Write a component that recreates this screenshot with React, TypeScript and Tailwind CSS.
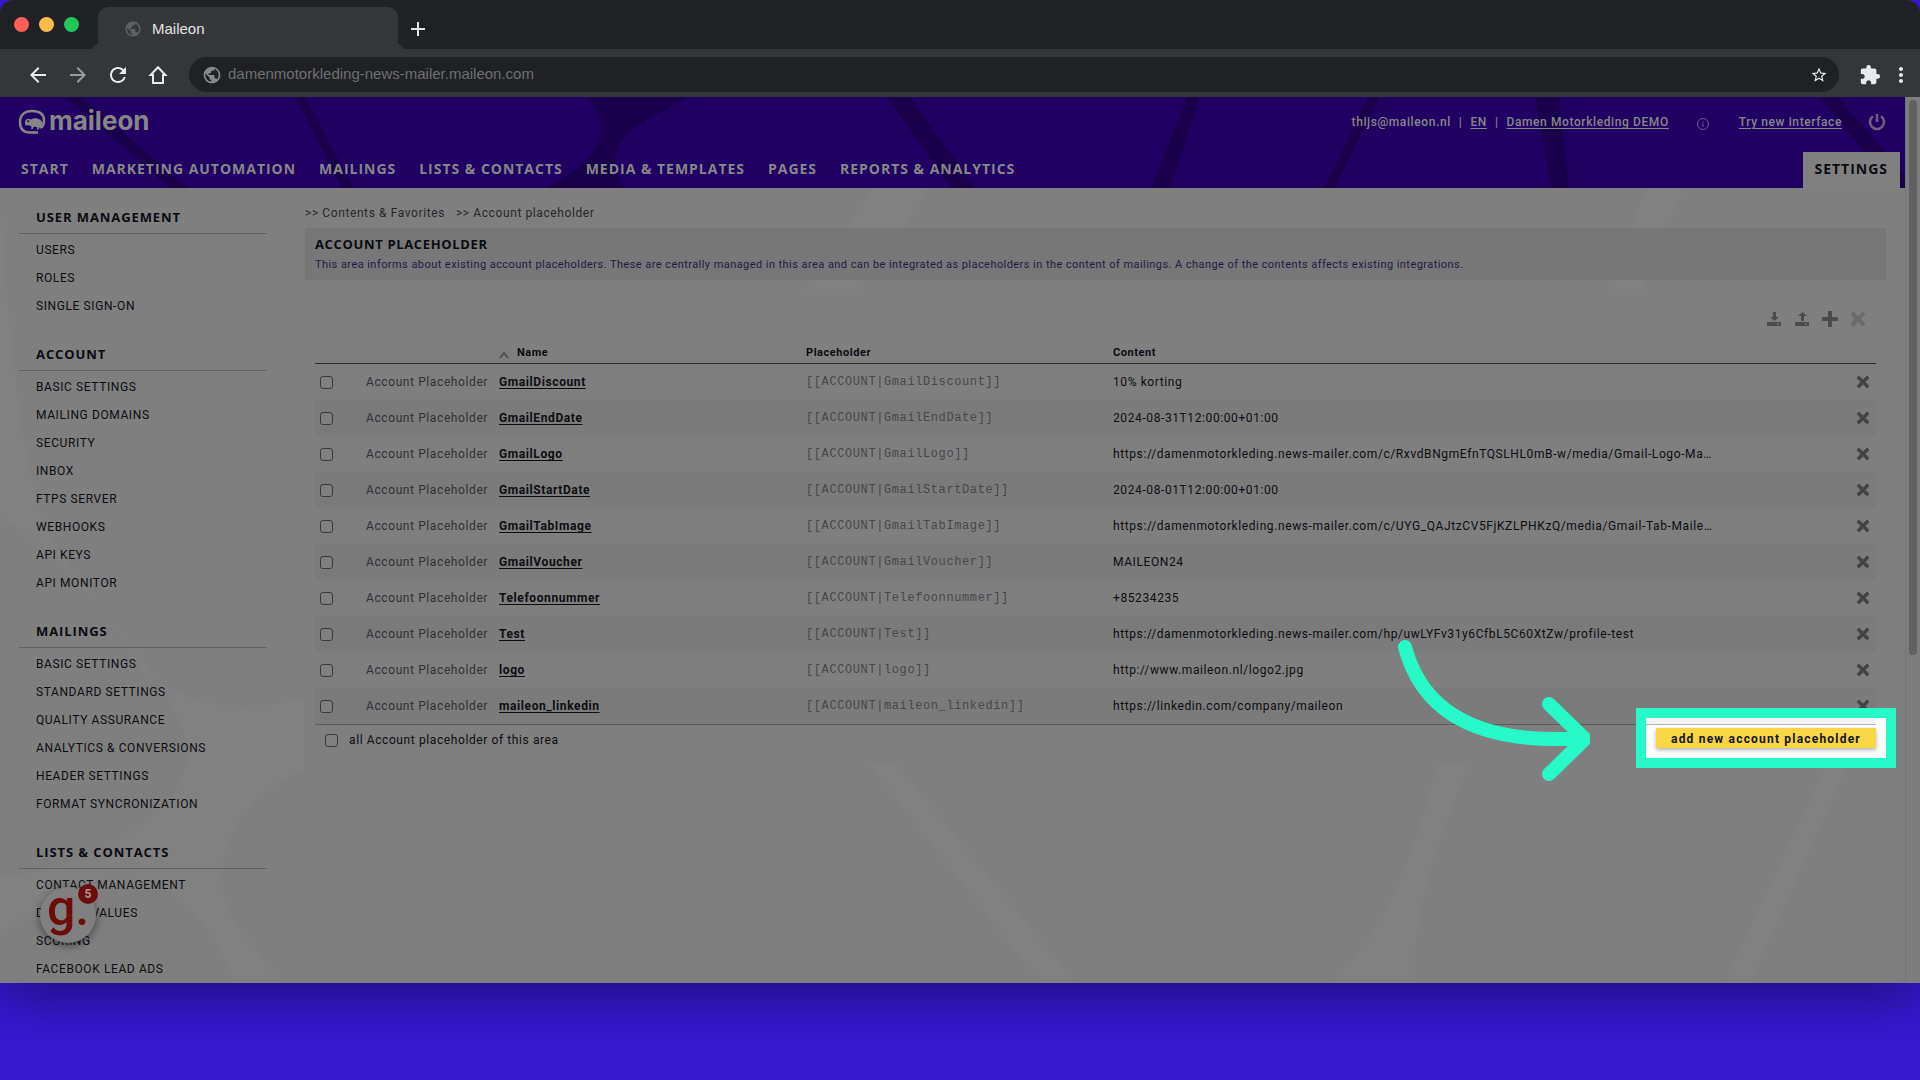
import { useState } from "react";
import { MdArrowBack, MdArrowForward, MdExtension, MdMoreVert, MdPublic, MdRefresh, MdStarBorder } from "react-icons/md";

interface MenuSection {
    title: string;
    items: string[];
}

interface PlaceholderRow {
    name: string;
    content: string;
}

const NAV = [
    "START",
    "MARKETING AUTOMATION",
    "MAILINGS",
    "LISTS & CONTACTS",
    "MEDIA & TEMPLATES",
    "PAGES",
    "REPORTS & ANALYTICS",
];

const MENU: MenuSection[] = [
    { title: "USER MANAGEMENT", items: ["USERS", "ROLES", "SINGLE SIGN-ON"] },
    {
        title: "ACCOUNT",
        items: [
            "BASIC SETTINGS",
            "MAILING DOMAINS",
            "SECURITY",
            "INBOX",
            "FTPS SERVER",
            "WEBHOOKS",
            "API KEYS",
            "API MONITOR",
        ],
    },
    {
        title: "MAILINGS",
        items: [
            "BASIC SETTINGS",
            "STANDARD SETTINGS",
            "QUALITY ASSURANCE",
            "ANALYTICS & CONVERSIONS",
            "HEADER SETTINGS",
            "FORMAT SYNCRONIZATION",
        ],
    },
    {
        title: "LISTS & CONTACTS",
        items: ["CONTACT MANAGEMENT", "DEFAULT VALUES", "SCORING", "FACEBOOK LEAD ADS"],
    },
];

const ROWS: PlaceholderRow[] = [
    { name: "GmailDiscount", content: "10% korting" },
    { name: "GmailEndDate", content: "2024-08-31T12:00:00+01:00" },
    {
        name: "GmailLogo",
        content: "https://damenmotorkleding.news-mailer.com/c/RxvdBNgmEfnTQSLHL0mB-w/media/Gmail-Logo-Ma…",
    },
    { name: "GmailStartDate", content: "2024-08-01T12:00:00+01:00" },
    {
        name: "GmailTabImage",
        content: "https://damenmotorkleding.news-mailer.com/c/UYG_QAJtzCV5FjKZLPHKzQ/media/Gmail-Tab-Maile…",
    },
    { name: "GmailVoucher", content: "MAILEON24" },
    { name: "Telefoonnummer", content: "+85234235" },
    { name: "Test", content: "https://damenmotorkleding.news-mailer.com/hp/uwLYFv31y6CfbL5C60XtZw/profile-test" },
    { name: "logo", content: "http://www.maileon.nl/logo2.jpg" },
    { name: "maileon_linkedin", content: "https://linkedin.com/company/maileon" },
];

const CHECKBOX =
    "block size-[13px] shrink-0 appearance-none rounded-[3px] border border-[#3a3a3a] bg-[#808080] checked:bg-[#1a1a1a]";

function CrossIcon({ className }: { className: string }) {
    return (
        <svg viewBox="0 0 16 16" className={className} fill="none" stroke="currentColor" strokeWidth="4" aria-hidden="true">
            <path d="M2 2l12 12M14 2L2 14" />
        </svg>
    );
}

function TabStrip() {
    return (
        <div className="flex h-[49px] items-center overflow-hidden bg-[#202124] pl-[14px]">
            <div className="flex gap-[10px]">
                <span className="size-[15px] rounded-full bg-[#ff5f57]" />
                <span className="size-[15px] rounded-full bg-[#febb4b]" />
                <span className="size-[15px] rounded-full bg-[#22c759]" />
            </div>
            <div className="relative ml-[19px] flex h-[42px] w-[300px] items-center gap-[10px] self-end rounded-t-[10px] bg-[#35363a] pt-[2px] pl-[26px] font-['Liberation_Sans',sans-serif] text-[15px] text-[#e3e4e6] before:absolute before:bottom-0 before:-left-[10px] before:size-[10px] before:rounded-br-[10px] before:shadow-[5px_5px_0_0_#35363a] after:absolute after:-right-[10px] after:bottom-0 after:size-[10px] after:rounded-bl-[10px] after:shadow-[-5px_5px_0_0_#35363a]">
                <MdPublic className="size-[18px] text-[#5f6165]" aria-hidden="true" />
                <span className="leading-5">Maileon</span>
            </div>
            <button type="button" aria-label="New tab" className="mt-2 ml-3 text-[#e3e4e6]">
                <svg viewBox="0 0 16 16" className="size-4" stroke="currentColor" strokeWidth="2" aria-hidden="true">
                    <path d="M8 1v14M1 8h14" />
                </svg>
            </button>
        </div>
    );
}

function AddressBar() {
    return (
        <div className="flex h-12 items-center bg-[#35363a] pt-[3px] pr-[7px] pl-[26px] text-[#e8eaed]">
            <div className="flex gap-4">
                <button type="button" aria-label="Back">
                    <MdArrowBack className="size-6" />
                </button>
                <button type="button" aria-label="Forward" className="text-[#9a9b9e]">
                    <MdArrowForward className="size-6" />
                </button>
                <button type="button" aria-label="Reload">
                    <MdRefresh className="size-6" />
                </button>
                <button type="button" aria-label="Home">
                    <svg viewBox="0 0 24 24" className="size-6" fill="none" stroke="currentColor" strokeWidth="2" aria-hidden="true">
                        <path d="M12 4.2L4.6 12H7v8h10v-8h2.4z" />
                    </svg>
                </button>
            </div>
            <div className="ml-[19px] flex h-[35px] flex-1 items-center rounded-full bg-[#202124] pr-[11px] pl-[13px]">
                <MdPublic className="size-5 text-[#87898d]" aria-hidden="true" />
                <input
                    type="text"
                    aria-label="Address"
                    defaultValue="damenmotorkleding-news-mailer.maileon.com"
                    className="ml-[6px] flex-1 bg-transparent font-['Liberation_Sans',sans-serif] text-[15px] text-[#6d6f73] outline-none"
                />
                <button type="button" aria-label="Bookmark">
                    <MdStarBorder className="size-[18px]" />
                </button>
            </div>
            <button type="button" aria-label="Extensions" className="ml-5">
                <MdExtension className="size-[22px]" />
            </button>
            <button type="button" aria-label="Menu" className="ml-2">
                <MdMoreVert className="size-6" />
            </button>
        </div>
    );
}

function Logo() {
    return (
        <a href="#" className="flex items-center gap-[3px] text-[#868686]">
            <svg viewBox="0 0 28 26" className="h-[26px] w-7" fill="none" aria-hidden="true">
                <path
                    d="M20 23.500h-8C5 23.500 2 19.500 2 13S6 2 14 2s12 3.600 12 9.500c0 4-1.600 7-4.500 7"
                    stroke="currentColor"
                    strokeWidth="2.500"
                />
                <path
                    d="M7 13c.6-2.600 2.200-3.600 4.300-3.200l1.700.8c2.500-1.900 6.600-1.900 9.300.2l2.500 3-2.300 4.700-1.300-.4-.7 2.300h-1.600l.2-2.500-3.500-.2-1 2.400h-1.500l.4-2.600-2.400-1.200-3.800.3z"
                    fill="currentColor"
                />
                <circle cx="10.300" cy="12.300" r="1" fill="#210063" />
            </svg>
            <span className="mb-[2px] font-['Inter',sans-serif] text-[26px] leading-6 font-bold">maileon</span>
        </a>
    );
}

function Header() {
    return (
        <header className="relative flex h-[91px] flex-col justify-between bg-[#210063] text-[#878787]">
            <svg
                viewBox="0 0 1905 91"
                preserveAspectRatio="none"
                className="pointer-events-none absolute inset-0 size-full"
                fill="#19004b"
                aria-hidden="true"
            >
                <path d="M66 0h16l106 91h-18zM295 0h10l49 91h-12zM588 0h100L640 27C616 43 608 62 624 91h-78C592 66 618 40 588 0zM887 0h23l65 91h-24zM1187 0h13l-30 91h-19zM1368 0h11l-44 91h-11zM1535 0h24l10 91h-18zM1820 0h18l67 77v14h-12z" />
            </svg>
            <div className="relative flex items-center justify-between pt-3 pr-[19px] pl-[18px]">
                <Logo />
                <div className="flex items-center font-['Roboto',sans-serif] text-[12px] leading-4 font-medium tracking-wider">
                    <span>thijs@maileon.nl</span>
                    <span className="mx-2">|</span>
                    <a href="#" className="underline underline-offset-2">EN</a>
                    <span className="mx-2">|</span>
                    <a href="#" className="underline underline-offset-2">Damen Motorkleding DEMO</a>
                    <svg viewBox="0 0 12 12" className="mt-1 mr-[30px] ml-7 size-3" fill="none" stroke="#6f5a92" aria-hidden="true">
                        <circle cx="6" cy="6" r="5.500" />
                        <path d="M6 5v4M6 3v1.200" />
                    </svg>
                    <a href="#" className="underline underline-offset-2">Try new interface</a>
                    <button type="button" aria-label="Log out" className="ml-[26px]">
                        <svg viewBox="0 0 18 18" className="size-[18px]" fill="none" stroke="#6f5f80" strokeWidth="2.500" aria-hidden="true">
                            <path d="M5 3.200a7 7 0 1 0 8 0M9 1v8" />
                        </svg>
                    </button>
                </div>
            </div>
            <nav className="relative flex h-9 items-stretch pr-[5px] pl-[21px] font-['Open_Sans',sans-serif] text-[14px] leading-[34px] font-bold tracking-[0.07em] whitespace-nowrap">
                <div className="flex gap-[23px]">
                    {NAV.map((label) => (
                        <a key={label} href="#">
                            {label}
                        </a>
                    ))}
                </div>
                <a href="#" aria-current="page" className="ml-auto bg-[#808080] px-3 text-[#0b0b12]">
                    SETTINGS
                </a>
            </nav>
        </header>
    );
}

function Sidebar() {
    return (
        <aside className="relative ml-[19px] w-[248px] shrink-0 pt-[19px]">
            {MENU.map((section) => (
                <section key={section.title} className="mb-6 last:mb-0">
                    <h2 className="border-b border-[#606060] pb-[6px] pl-[17px] font-['Open_Sans',sans-serif] text-[13px] leading-5 font-bold tracking-[0.07em] text-[#0b0b12]">
                        {section.title}
                    </h2>
                    <ul className="pt-[2px] pl-[17px] font-['Roboto',sans-serif] text-[12px] leading-7 tracking-wider text-[#0d0d12]">
                        {section.items.map((item) => (
                            <li key={item}>
                                <a href="#">{item}</a>
                            </li>
                        ))}
                    </ul>
                </section>
            ))}
        </aside>
    );
}

function ListTools() {
    return (
        <div className="flex h-[60px] items-center justify-end gap-3 pt-[18px] pr-[10px] text-[#4b4b4b]">
            <button type="button" aria-label="Import">
                <svg viewBox="0 0 16 16" className="size-4" fill="currentColor" aria-hidden="true">
                    <path d="M7 1h3v5h3l-4.500 4L4 6h3zM1 11h14v4H1z" />
                    <path d="M11 12.500h2v1h-2z" fill="#808080" />
                </svg>
            </button>
            <button type="button" aria-label="Export">
                <svg viewBox="0 0 16 16" className="size-4" fill="currentColor" aria-hidden="true">
                    <path d="M7 10h3V5h3L8.500 1 4 5h3zM1 11h14v4H1z" />
                    <path d="M11 12.500h2v1h-2z" fill="#808080" />
                </svg>
            </button>
            <button type="button" aria-label="Add">
                <svg viewBox="0 0 16 16" className="size-4" stroke="currentColor" strokeWidth="4" aria-hidden="true">
                    <path d="M8 0v16M0 8h16" />
                </svg>
            </button>
            <button type="button" aria-label="Delete selected" className="text-[#6a6a6a]">
                <CrossIcon className="size-4" />
            </button>
        </div>
    );
}

// Frame, pointer arrow and lit backdrop of the guided tour step
function TourHighlight() {
    return (
        <div className="pointer-events-none absolute -top-5 -right-5 h-[60px] w-[260px] border-[10px] border-[#28f9c9] bg-white">
            <div className="mr-[10px] h-[6px] bg-[#f4f4f4]" />
            <div className="mr-[10px] h-px bg-[#b4b5ba]" />
            <svg
                viewBox="0 0 200 150"
                className="absolute -top-[83px] -left-[256px] h-[150px] w-[200px]"
                fill="none"
                stroke="#28f9c9"
                strokeWidth="14"
                strokeLinecap="round"
                strokeLinejoin="round"
                aria-hidden="true"
            >
                <path d="M15 12C28 62 69 112 194 103M159 69l36 35-36 35" />
            </svg>
        </div>
    );
}

function PlaceholderTable() {
    const [checked, setChecked] = useState<string[]>([]);

    const toggle = (name: string) =>
        setChecked((prev) => (prev.includes(name) ? prev.filter((n) => n !== name) : [...prev, name]));

    return (
        <table className="w-full table-fixed border-separate border-spacing-0 text-left">
            <colgroup>
                <col className="w-[51px]" />
                <col className="w-[133px]" />
                <col className="w-[307px]" />
                <col className="w-[307px]" />
                <col />
                <col className="w-[40px]" />
            </colgroup>
            <thead className="text-[11px] leading-4 tracking-wider text-[#0b0b12]">
                <tr className="h-6 [&>th]:border-b [&>th]:border-[#2b2b2b] [&>th]:px-0 [&>th]:pt-[2px] [&>th]:pb-0">
                    <th />
                    <th />
                    <th scope="col">
                        <span className="flex items-center gap-2">
                            <svg viewBox="0 0 10 10" className="mt-1 size-[10px]" fill="none" stroke="#505050" strokeWidth="2" aria-hidden="true">
                                <path d="M1 8l4-5 4 5" />
                            </svg>
                            Name
                        </span>
                    </th>
                    <th scope="col">Placeholder</th>
                    <th scope="col">Content</th>
                    <th />
                </tr>
            </thead>
            <tbody className="text-[12px] leading-4 tracking-wider text-[#0d0d12]">
                {ROWS.map((row) => (
                    <tr key={row.name} className="h-9 even:bg-[#7b7b7b] [&>td]:p-0">
                        <td>
                            <input
                                type="checkbox"
                                aria-label={`Select ${row.name}`}
                                checked={checked.includes(row.name)}
                                onChange={() => toggle(row.name)}
                                className={`ml-[5px] ${CHECKBOX}`}
                            />
                        </td>
                        <td className="whitespace-nowrap text-[#303036]">Account Placeholder</td>
                        <td>
                            <a href="#" className="font-bold underline underline-offset-2">
                                {row.name}
                            </a>
                        </td>
                        <td className="font-['Liberation_Mono',monospace] text-[#46464a]">{`[[ACCOUNT|${row.name}]]`}</td>
                        <td className="truncate">{row.content}</td>
                        <td>
                            <button type="button" aria-label={`Delete ${row.name}`} className="ml-5 block text-[#434343]">
                                <CrossIcon className="size-[14px]" />
                            </button>
                        </td>
                    </tr>
                ))}
            </tbody>
        </table>
    );
}

function Main() {
    return (
        <main className="relative mr-[19px] ml-[38px] min-w-0 flex-1 pt-[15px] font-['Roboto',sans-serif]">
            <div className="mb-[5px] flex gap-[11px] text-[12px] leading-5 tracking-wider text-[#27272c]">
                <a href="#">&gt;&gt; Contents &amp; Favorites</a>
                <a href="#">&gt;&gt; Account placeholder</a>
            </div>
            <div className="bg-[#777777] px-[10px] py-[6px]">
                <h1 className="font-['Open_Sans',sans-serif] text-[13px] leading-5 font-bold tracking-wider text-[#0b0b12]">
                    ACCOUNT PLACEHOLDER
                </h1>
                <p className="pt-px text-[11px] leading-[19px] tracking-[0.04em] text-[#211a45]">
                    This area informs about existing account placeholders. These are centrally managed in this area and can be
                    integrated as placeholders in the content of mailings. A change of the contents affects existing
                    integrations.
                </p>
            </div>
            <div className="px-[10px]">
                <ListTools />
                <PlaceholderTable />
                <div className="flex items-start justify-between border-t border-[#5c5c5c] pt-[3px]">
                    <label className="mt-1 ml-[10px] flex items-center gap-[11px] text-[12px] leading-4 tracking-wider text-[#0d0d12]">
                        <input type="checkbox" className={CHECKBOX} />
                        all Account placeholder of this area
                    </label>
                    <div className="relative">
                        <TourHighlight />
                        <button
                            type="button"
                            className="relative block h-5 w-[220px] bg-[#f8d645] pt-px text-[12px] leading-5 font-bold tracking-widest text-[#14141f] shadow-[0_2px_4px_rgba(0,0,0,0.3)]"
                        >
                            add new account placeholder
                        </button>
                    </div>
                </div>
            </div>
        </main>
    );
}

function HelpBubble() {
    return (
        <button
            type="button"
            aria-label="Help, 5 new messages"
            className="absolute bottom-10 left-10 flex size-14 items-center justify-center rounded-full bg-[#808080] text-[#6d0d0b] shadow-[0_3px_8px_rgba(0,0,0,0.45)]"
        >
            <span className="mb-[14px] font-['Roboto',sans-serif] text-[50px] leading-none font-medium">g.</span>
            <span className="absolute -top-[3px] -right-[2px] flex size-5 items-center justify-center rounded-full bg-[#6d0d0b] font-['Roboto',sans-serif] text-[12px] font-bold text-[#a09a9a]">
                5
            </span>
        </button>
    );
}

export default function App() {
    return (
        <div className="flex min-h-screen flex-col bg-[#3719d2] pb-[97px]">
            <div className="flex flex-1 flex-col rounded-t-[14px] bg-[#35363a] shadow-[0_20px_50px_rgba(0,0,0,0.35)]">
                <div className="overflow-hidden rounded-t-[14px]">
                    <TabStrip />
                    <AddressBar />
                </div>
                <div className="flex flex-1 overflow-hidden bg-[#7f7f7f]">
                    <div className="relative flex min-w-0 flex-1 flex-col">
                        <Header />
                        <div className="relative flex flex-1">
                            <svg
                                viewBox="0 0 1905 795"
                                preserveAspectRatio="none"
                                className="pointer-events-none absolute inset-0 size-full"
                                fill="#818181"
                                aria-hidden="true"
                            >
                                <path d="M874 0h55l-69 102h-56zM1645 0h39l-41 102h-30zM1438 575h31C1440 650 1410 730 1415 795h-84C1390 740 1415 660 1438 575zM1827 575h22l-99 220h-26zM868 575h28l180 220h-36z" />
                                <path d="M0 20C10 150 20 260 42 330 60 380 98 402 140 480 200 530 260 520 304 510V582C230 610 200 690 240 740L280 795H234C200 700 120 640 0 750V690C100 680 190 620 188 560 180 500 60 360 0 330z" />
                            </svg>
                            <Sidebar />
                            <Main />
                        </div>
                        <HelpBubble />
                    </div>
                    <div className="w-[15px] shrink-0 border-l border-[#747474] bg-[#7d7d7d] pt-[3px] pl-[3px]">
                        <div className="h-[555px] w-2 rounded-full bg-[#606060]" />
                    </div>
                </div>
            </div>
        </div>
    );
}
